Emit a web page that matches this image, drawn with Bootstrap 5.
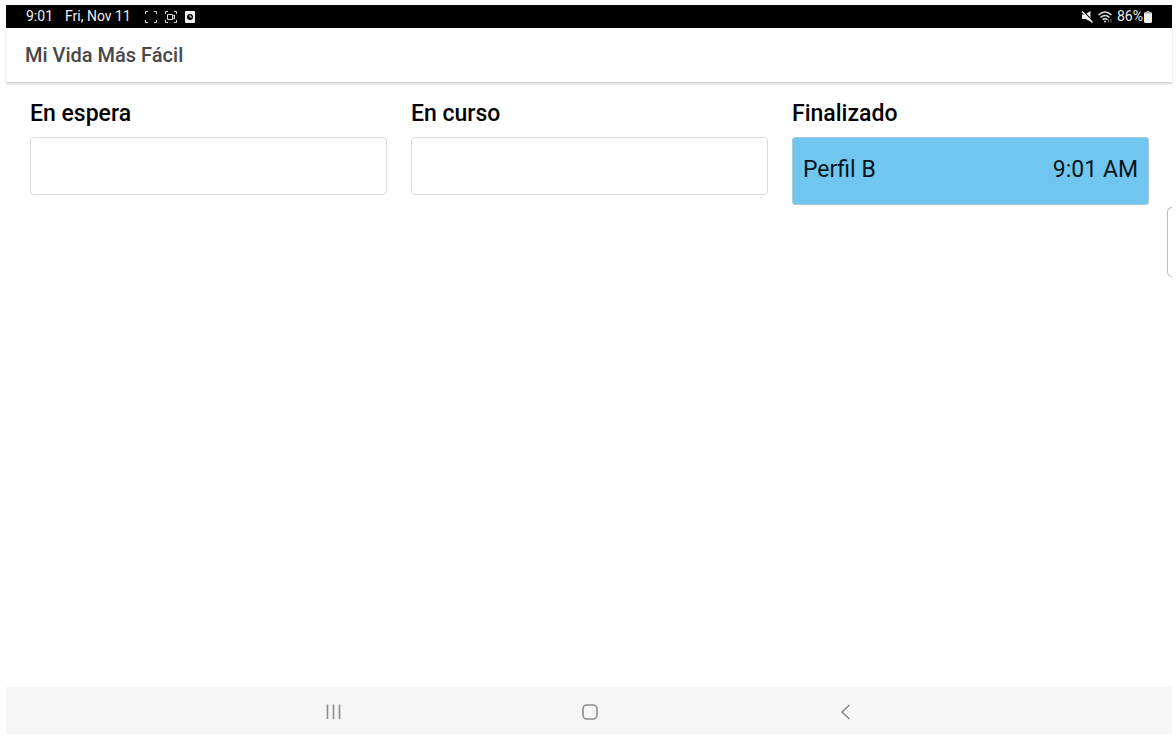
<!DOCTYPE html>
<html lang="es">
<head>
<meta charset="utf-8">
<meta name="viewport" content="width=device-width, initial-scale=1">
<title>Mi Vida Más Fácil</title>
<link href="https://cdn.jsdelivr.net/npm/bootstrap@5.3.0/dist/css/bootstrap.min.css" rel="stylesheet">
<style>
  body { font-family: Roboto, "Liberation Sans", sans-serif; background: #fff; color: #000; padding: 5px 4px 8px 6px; }
  .status-bar { height: 23px; padding: 0 19px 0 20px; background: #000; color: #eee; font-size: 14px; line-height: 23px; }
  .status-gap { margin-right: 12px; }
  .status-icons { padding-left: 14px; }
  .app-header { height: 55px; padding: 0 19px; border-bottom: 1px solid #d4d4d4; box-shadow: 0 1px 2px rgba(0,0,0,.16); }
  .app-title { font-size: 20px; line-height: 24px; font-weight: 500; color: #484848; }
  .board { padding: 14px 23px 14px 24px; }
  .column-title { font-size: 23px; line-height: 32px; font-weight: 500; padding-top: 1px; margin-bottom: 7px; }
  .drop-zone { min-height: 58px; border: 1px solid #dcdcdc; border-radius: 4px; }
  .task { min-height: 68px; padding: 16px 10px 18px; background: #70c6ee; border: 1px solid #a9cbdc; border-radius: 3px; color: #06141c; font-size: 23px; line-height: 32px; }
  .edge-handle { right: 4px; top: 207px; width: 5px; height: 70px; border: 1px solid #bbb; border-right: 0; border-radius: 5px 0 0 5px; background: #fff; }
  .system-nav { height: 47px; padding: 2px 0 0 2px; background: #f6f6f6; gap: 232px; }
  .system-nav button { width: 24px; height: 24px; color: #8c8c8c; }
  svg { display: block; }
</style>
</head>
<body class="d-flex flex-column min-vh-100 position-relative">
<div class="status-bar d-flex justify-content-between align-items-center">
  <div class="d-flex align-items-center">
    <span class="status-gap">9:01</span><span>Fri, Nov 11</span>
    <div class="status-icons d-flex gap-2">
    <svg width="12" height="12" viewBox="0 0 12 12" fill="none" stroke="#ddd" aria-hidden="true"><path d="M.5 3V.5H3M9 .5h2.500V3M.5 9v2.500H3M9 11.500h2.500V9"/></svg>
    <svg width="12" height="12" viewBox="0 0 12 12" fill="none" stroke="#ddd" aria-hidden="true"><path d="M.5 3V.5H3M9 .5h2.500V3M.5 9v2.500H3M9 11.500h2.500V9M2.500 3.500h5v5h-5zM7.500 5.500 9.500 4v4l-2-1.500"/></svg>
    <svg width="10" height="12" viewBox="0 0 10 12" aria-hidden="true"><rect width="10" height="12" rx="1" fill="#eee"/><circle cx="5" cy="6" r="3" fill="#000"/><path d="M5 4v2h2" fill="none" stroke="#eee"/></svg>
    </div>
  </div>
  <div class="d-flex align-items-center">
    <svg class="me-1" width="13" height="12" viewBox="0 0 13 12" aria-hidden="true"><path d="M1 3.500h3L9.500 0v10.500L4.500 8H1z" fill="#eee"/><path d="m2 0 11 11" stroke="#000" stroke-width="1.200"/><path d="m1 .5 10.500 11" stroke="#eee" stroke-width="1.500"/></svg>
    <svg class="me-1" width="15" height="12" viewBox="0 0 15 12" fill="none" stroke="#ddd" stroke-width="1.500" aria-hidden="true"><path d="M.5 4q6.500-6 13 0M2.500 6.500q4.500-4 9 0M4.500 8.700q2.500-2 5 0"/><circle cx="7" cy="10.500" r="1" fill="#ddd" stroke="none"/><path d="M10.500 8v3.500M13 11.500V8" stroke="#777" stroke-width="1"/></svg>
    <span>86%</span>
    <svg width="10" height="12" viewBox="0 0 10 12" aria-hidden="true"><path d="M3.500 0h3v1.500h-3z" fill="#aaa"/><rect x="1" y="1" width="8" height="11" rx="1.500" fill="#eee"/><path d="M2 1h6v1.500H2z" fill="#aaa"/></svg>
  </div>
</div>
<header class="app-header d-flex align-items-center"><h1 class="app-title mb-0">Mi Vida Más Fácil</h1></header>
<main class="board flex-grow-1">
  <div class="row gx-4">
    <section class="col-4"><h2 class="column-title">En espera</h2><div class="drop-zone"></div></section>
    <section class="col-4"><h2 class="column-title">En curso</h2><div class="drop-zone"></div></section>
    <section class="col-4"><h2 class="column-title">Finalizado</h2><div class="task d-flex justify-content-between"><span>Perfil B</span><time datetime="09:01">9:01 AM</time></div></section>
  </div>
</main>
<div class="edge-handle position-absolute"></div>
<nav class="system-nav d-flex justify-content-center align-items-center" aria-label="Sistema">
  <button class="btn p-0 border-0" type="button" aria-label="Recientes"><svg width="24" height="24" viewBox="0 0 24 24" fill="none" stroke="currentColor" stroke-width="1.600"><path d="M5.500 4.500v14.500M11.500 4.500v14.500M17.500 4.500v14.500"/></svg></button>
  <button class="btn p-0 border-0" type="button" aria-label="Inicio"><svg width="24" height="24" viewBox="0 0 24 24" fill="none" stroke="currentColor" stroke-width="1.600"><rect x="5" y="5" width="14" height="14" rx="4"/></svg></button>
  <button class="btn p-0 border-0" type="button" aria-label="Atrás"><svg width="24" height="24" viewBox="0 0 24 24" fill="none" stroke="currentColor" stroke-width="1.600"><path d="m15.500 5-7.500 7 7.500 7"/></svg></button>
</nav>
<script src="https://cdn.jsdelivr.net/npm/bootstrap@5.3.0/dist/js/bootstrap.bundle.min.js"></script>
</body>
</html>
